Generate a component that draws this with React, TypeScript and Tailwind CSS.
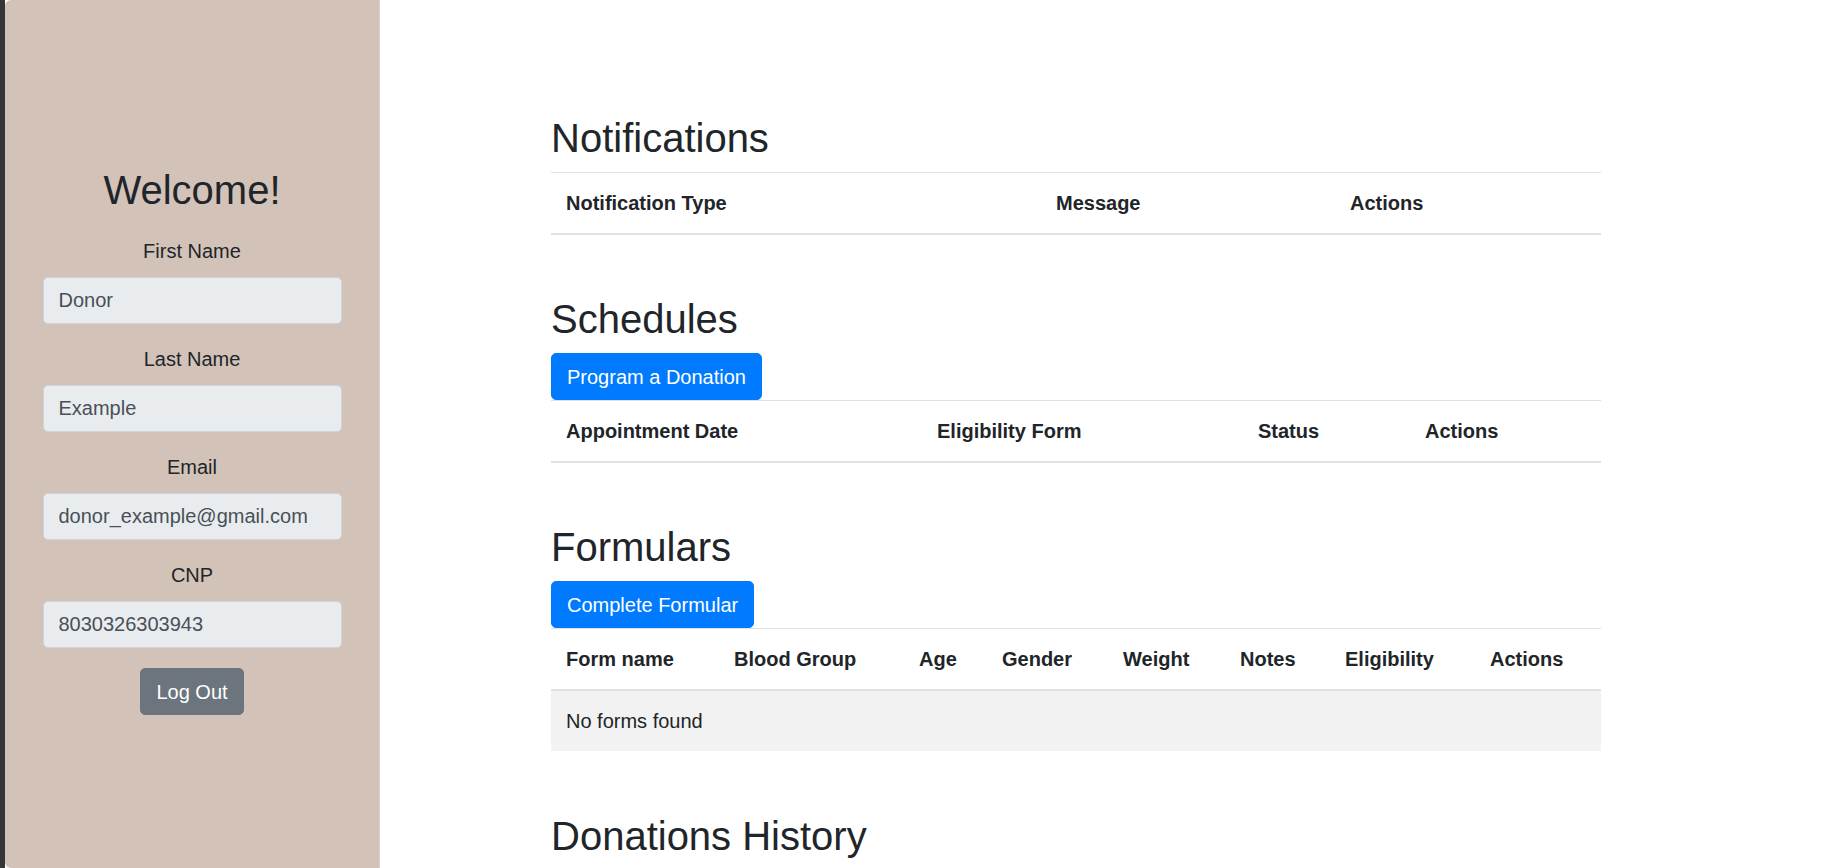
import React from "react";

const fields = [
  { label: "First Name", value: "Donor" },
  { label: "Last Name", value: "Example" },
  { label: "Email", value: "donor_example@gmail.com" },
  { label: "CNP", value: "8030326303943" },
];

type Col = { name: string; w: string };

const notificationCols: Col[] = [
  { name: "Notification Type", w: "w-[490px]" },
  { name: "Message", w: "w-[294px]" },
  { name: "Actions", w: "w-[266px]" },
];

const scheduleCols: Col[] = [
  { name: "Appointment Date", w: "w-[371px]" },
  { name: "Eligibility Form", w: "w-[321px]" },
  { name: "Status", w: "w-[167px]" },
  { name: "Actions", w: "w-[191px]" },
];

const formCols: Col[] = [
  { name: "Form name", w: "w-[168px]" },
  { name: "Blood Group", w: "w-[185px]" },
  { name: "Age", w: "w-[83px]" },
  { name: "Gender", w: "w-[121px]" },
  { name: "Weight", w: "w-[117px]" },
  { name: "Notes", w: "w-[105px]" },
  { name: "Eligibility", w: "w-[145px]" },
  { name: "Actions", w: "w-[126px]" },
];

function DataTable({ cols, emptyText }: { cols: Col[]; emptyText?: string }) {
  return (
    <table className="w-[1050px] table-fixed border-collapse text-[#212529]">
      <thead>
        <tr>
          {cols.map((c, i) => (
            <th
              key={i}
              className={`${c.w} border-t border-b-2 border-[#dee2e6] px-[15px] py-[15px] text-left align-bottom text-[20px] leading-[30px] font-bold`}
            >
              {c.name}
            </th>
          ))}
        </tr>
      </thead>
      {emptyText && (
        <tbody>
          <tr className="bg-[#f2f2f2]">
            <td colSpan={cols.length} className="border-t border-[#dee2e6] px-[15px] py-[15px] text-[20px] leading-[30px]">
              {emptyText}
            </td>
          </tr>
        </tbody>
      )}
    </table>
  );
}

function Heading({ children }: { children: React.ReactNode }) {
  return <h2 className="text-[40px] leading-[48px] font-normal text-[#212529] mb-[10px]">{children}</h2>;
}

function BlueButton({ children }: { children: React.ReactNode }) {
  return (
    <button className="h-[47px] px-[15px] bg-[#007bff] border border-[#007bff] text-white text-[20px] leading-[30px] rounded-[5px]">
      {children}
    </button>
  );
}

function App() {
  return (
    <div className="flex h-screen w-full overflow-hidden bg-white font-['Liberation_Sans',Arial,sans-serif] text-[#212529]">
      {/* window edge */}
      <div className="w-[5px] shrink-0 bg-[#363636]" />

      {/* Sidebar */}
      <aside className="w-[375px] shrink-0 bg-[#d3c2b8] rounded-l-[6px] border-r border-[#d9d4d1] flex flex-col items-center pt-[166px]">
        <h1 className="text-[40px] leading-[48px] font-normal mb-[22px]">Welcome!</h1>
        {fields.map((f) => (
          <div key={f.label} className="flex flex-col items-center">
            <label className="text-[20px] leading-[30px] mb-[11px]">{f.label}</label>
            <input
              readOnly
              value={f.value}
              className="w-[299px] h-[47px] px-[15px] mb-[20px] text-[20px] text-[#495057] bg-[#e9ecef] border border-[#ced4da] rounded-[5px] outline-none"
            />
          </div>
        ))}
        <button className="h-[47px] px-[15px] bg-[#6c757d] border border-[#6c757d] text-white text-[20px] leading-[30px] rounded-[5px]">
          Log Out
        </button>
      </aside>

      {/* Main */}
      <main className="flex-1 pl-[171px] pt-[114px]">
        <section>
          <Heading>Notifications</Heading>
          <DataTable cols={notificationCols} />
        </section>

        <section className="mt-[60px]">
          <Heading>Schedules</Heading>
          <BlueButton>Program a Donation</BlueButton>
          <DataTable cols={scheduleCols} />
        </section>

        <section className="mt-[60px]">
          <Heading>Formulars</Heading>
          <BlueButton>Complete Formular</BlueButton>
          <DataTable cols={formCols} emptyText="No forms found" />
        </section>

        <section className="mt-[61px]">
          <Heading>Donations History</Heading>
        </section>
      </main>
    </div>
  );
}

export default App;
